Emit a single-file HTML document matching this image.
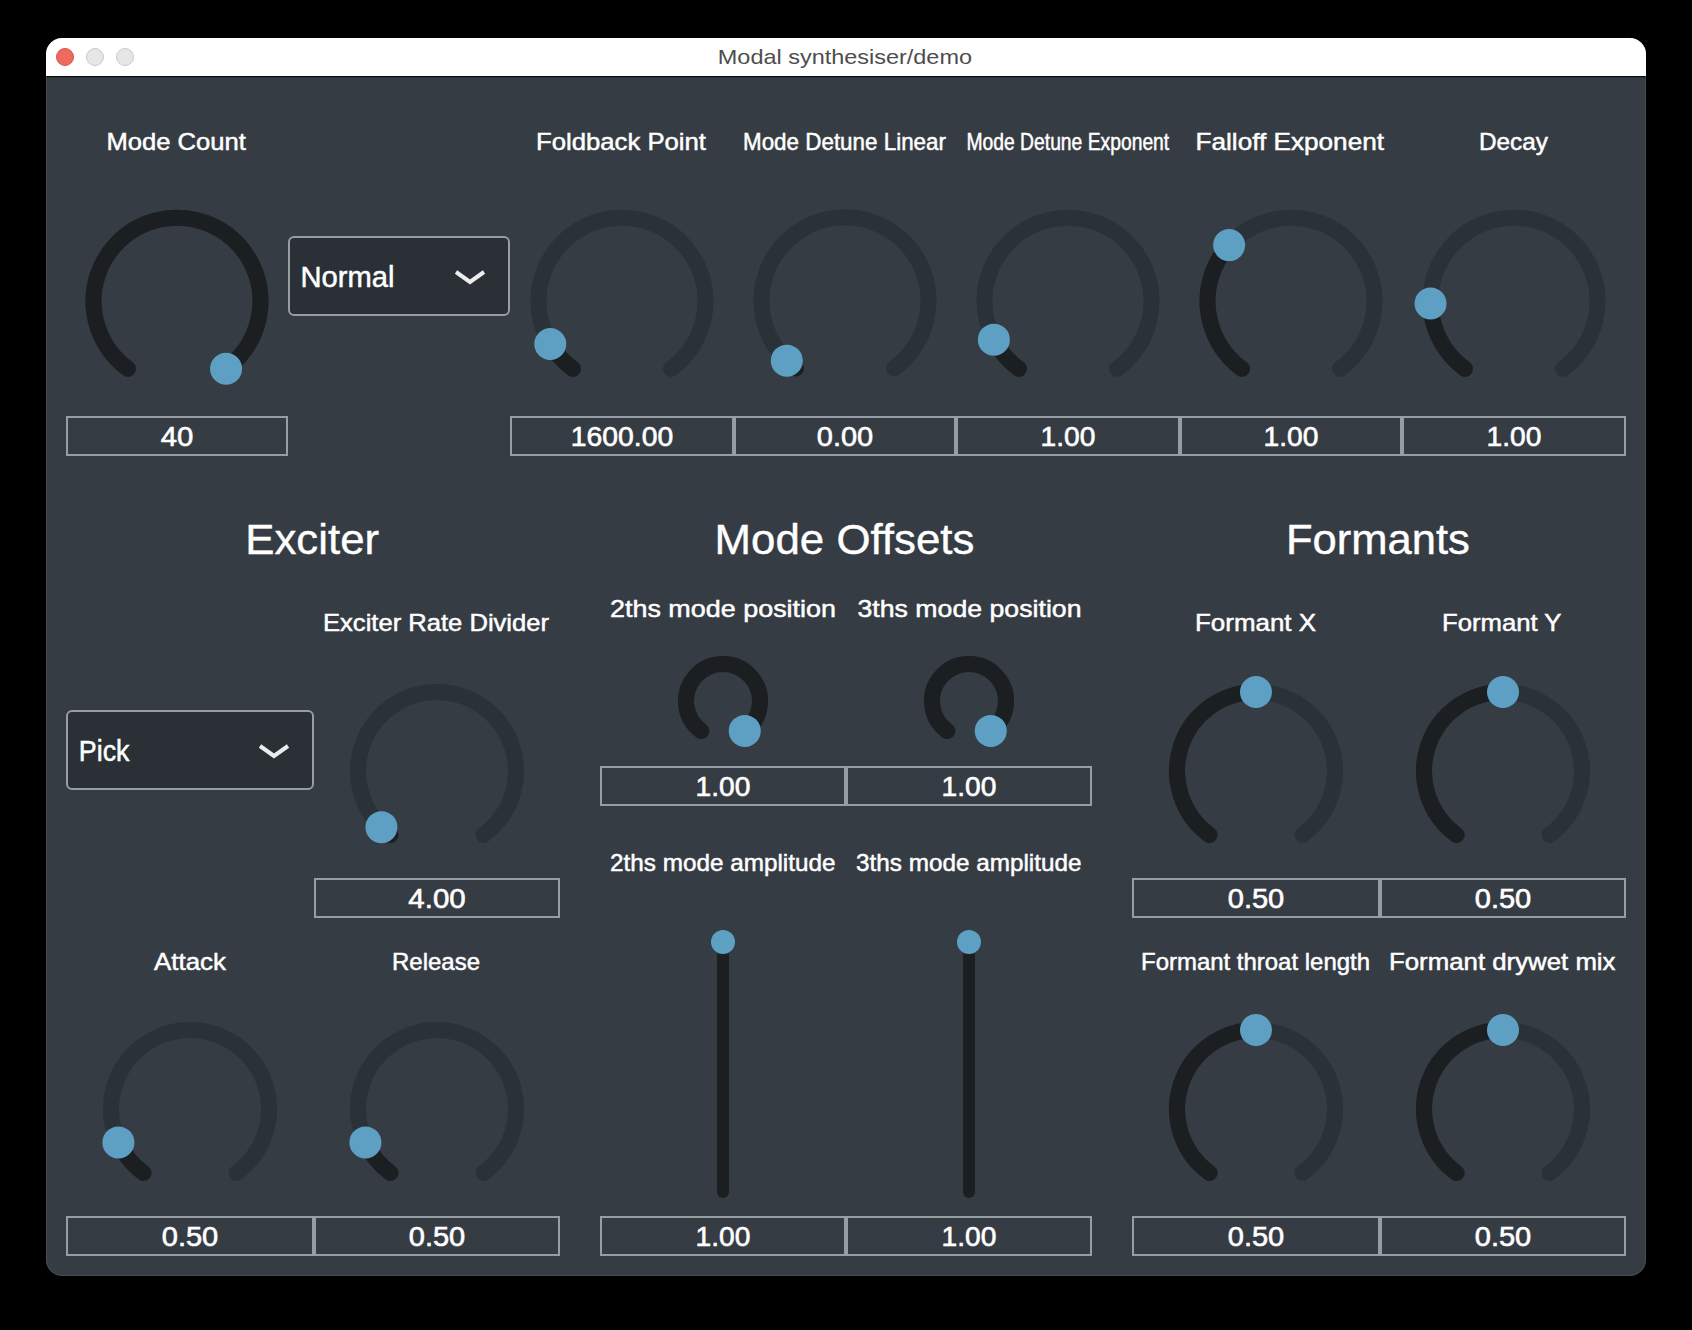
<!DOCTYPE html>
<html><head><meta charset="utf-8"><style>
html,body{margin:0;padding:0;background:#000;width:1692px;height:1330px;overflow:hidden}
#win{position:absolute;left:46px;top:38px;width:1600px;height:1238px;border-radius:16px;overflow:hidden;background:#363c43}
#tb{position:absolute;left:0;top:0;width:1600px;height:38px;background:#fff}
#sep{position:absolute;left:0;top:38px;width:1600px;height:1px;background:#061015}
#sep2{position:absolute;left:0;top:39px;width:1600px;height:1px;background:#282e34}
#edge{position:absolute;left:46px;top:38px;width:1600px;height:1238px;border-radius:16px;box-sizing:border-box;border:1px solid rgba(255,255,255,0.09)}
.dot{position:absolute;top:10px;width:18px;height:18px;border-radius:50%;box-sizing:border-box}
svg{position:absolute;left:0;top:0}
text{font-family:"Liberation Sans",sans-serif;fill:#fff}
.t{font-size:21px;fill:#4d4d4d}
.l{font-size:24.5px;stroke:#fff;stroke-width:0.5px}
.h{font-size:42.8px;stroke:#fff;stroke-width:0.4px}
.c{font-size:29.3px;stroke:#fff;stroke-width:0.5px}
.v{font-size:27px;text-anchor:middle;stroke:#fff;stroke-width:0.6px}
</style></head><body>
<div id="win">
<div id="tb">
<div class="dot" style="left:10px;background:#ed6a5e;border:1px solid #d9534a"></div>
<div class="dot" style="left:40px;background:#e6e6e6;border:1px solid #c9c9c9"></div>
<div class="dot" style="left:70px;background:#e6e6e6;border:1px solid #c9c9c9"></div>
</div>
<div id="sep"></div><div id="sep2"></div>
</div>
<div id="edge"></div>
<svg width="1692" height="1330" viewBox="0 0 1692 1330">
<text x="717.8" y="64.1" class="t" textLength="254.2" lengthAdjust="spacingAndGlyphs">Modal synthesiser/demo</text>
<text x="106.4" y="150.0" class="l" textLength="139.5" lengthAdjust="spacingAndGlyphs">Mode Count</text>
<text x="536.0" y="150.0" class="l" textLength="170.0" lengthAdjust="spacingAndGlyphs">Foldback Point</text>
<text x="743.0" y="150.0" class="l" textLength="203.0" lengthAdjust="spacingAndGlyphs">Mode Detune Linear</text>
<text x="966.5" y="150.0" class="l" textLength="202.7" lengthAdjust="spacingAndGlyphs">Mode Detune Exponent</text>
<text x="1195.5" y="150.0" class="l" textLength="188.5" lengthAdjust="spacingAndGlyphs">Falloff Exponent</text>
<text x="1479.0" y="150.0" class="l" textLength="69.0" lengthAdjust="spacingAndGlyphs">Decay</text>
<path d="M127.92 368.75A83.5 83.5 0 1 1 226.08 368.75" fill="none" stroke="#2a3137" stroke-width="16" stroke-linecap="round"/>
<path d="M127.92 368.75A83.5 83.5 0 1 1 226.08 368.75" fill="none" stroke="#1b1f22" stroke-width="16" stroke-linecap="round"/>
<circle cx="226.08" cy="368.75" r="16" fill="#5da0c4"/>
<path d="M572.92 368.75A83.5 83.5 0 1 1 671.08 368.75" fill="none" stroke="#2a3137" stroke-width="16" stroke-linecap="round"/>
<path d="M572.92 368.75A83.5 83.5 0 0 1 550.28 343.96" fill="none" stroke="#1b1f22" stroke-width="16" stroke-linecap="round"/>
<circle cx="550.28" cy="343.96" r="16" fill="#5da0c4"/>
<path d="M795.92 368.35A83.5 83.5 0 1 1 894.08 368.35" fill="none" stroke="#2a3137" stroke-width="16" stroke-linecap="round"/>
<path d="M795.92 368.35A83.5 83.5 0 0 1 786.79 360.66" fill="none" stroke="#1b1f22" stroke-width="16" stroke-linecap="round"/>
<circle cx="786.79" cy="360.66" r="16" fill="#5da0c4"/>
<path d="M1018.92 368.75A83.5 83.5 0 1 1 1117.08 368.75" fill="none" stroke="#2a3137" stroke-width="16" stroke-linecap="round"/>
<path d="M1018.92 368.75A83.5 83.5 0 0 1 993.87 339.63" fill="none" stroke="#1b1f22" stroke-width="16" stroke-linecap="round"/>
<circle cx="993.87" cy="339.63" r="16" fill="#5da0c4"/>
<path d="M1241.92 368.75A83.5 83.5 0 1 1 1340.08 368.75" fill="none" stroke="#2a3137" stroke-width="16" stroke-linecap="round"/>
<path d="M1241.92 368.75A83.5 83.5 0 0 1 1229.14 245.11" fill="none" stroke="#1b1f22" stroke-width="16" stroke-linecap="round"/>
<circle cx="1229.14" cy="245.11" r="16" fill="#5da0c4"/>
<path d="M1464.92 368.75A83.5 83.5 0 1 1 1563.08 368.75" fill="none" stroke="#2a3137" stroke-width="16" stroke-linecap="round"/>
<path d="M1464.92 368.75A83.5 83.5 0 0 1 1430.53 303.53" fill="none" stroke="#1b1f22" stroke-width="16" stroke-linecap="round"/>
<circle cx="1430.53" cy="303.53" r="16" fill="#5da0c4"/>
<rect x="67" y="417" width="220" height="38" fill="none" stroke="#979ea1" stroke-width="2"/>
<text x="177.0" y="446" class="v" textLength="32.6" lengthAdjust="spacingAndGlyphs">40</text>
<rect x="511" y="417" width="222" height="38" fill="none" stroke="#979ea1" stroke-width="2"/>
<text x="622.0" y="446" class="v" textLength="102.3" lengthAdjust="spacingAndGlyphs">1600.00</text>
<rect x="735" y="417" width="220" height="38" fill="none" stroke="#979ea1" stroke-width="2"/>
<text x="845.0" y="446" class="v" textLength="56.4" lengthAdjust="spacingAndGlyphs">0.00</text>
<rect x="957" y="417" width="222" height="38" fill="none" stroke="#979ea1" stroke-width="2"/>
<text x="1068.0" y="446" class="v" textLength="54.8" lengthAdjust="spacingAndGlyphs">1.00</text>
<rect x="1181" y="417" width="220" height="38" fill="none" stroke="#979ea1" stroke-width="2"/>
<text x="1291.0" y="446" class="v" textLength="54.8" lengthAdjust="spacingAndGlyphs">1.00</text>
<rect x="1403" y="417" width="222" height="38" fill="none" stroke="#979ea1" stroke-width="2"/>
<text x="1514.0" y="446" class="v" textLength="54.8" lengthAdjust="spacingAndGlyphs">1.00</text>
<rect x="289" y="237" width="220" height="78" rx="5" ry="5" fill="#2a3036" stroke="#979ea1" stroke-width="2"/>
<text x="300.5" y="287.2" class="c" textLength="94.0" lengthAdjust="spacingAndGlyphs">Normal</text>
<path d="M456 272.0L470 282.0L484 272.0" fill="none" stroke="#ececec" stroke-width="4"/>
<text x="245.2" y="554.0" class="h" textLength="133.9" lengthAdjust="spacingAndGlyphs">Exciter</text>
<text x="714.6" y="554.0" class="h" textLength="259.8" lengthAdjust="spacingAndGlyphs">Mode Offsets</text>
<text x="1286.0" y="554.0" class="h" textLength="183.9" lengthAdjust="spacingAndGlyphs">Formants</text>
<rect x="67" y="711" width="246" height="78" rx="5" ry="5" fill="#2a3036" stroke="#979ea1" stroke-width="2"/>
<text x="78.8" y="761.4" class="c" textLength="50.7" lengthAdjust="spacingAndGlyphs">Pick</text>
<path d="M260 746.0L274 756.0L288 746.0" fill="none" stroke="#ececec" stroke-width="4"/>
<text x="323.0" y="631.1" class="l" textLength="226.0" lengthAdjust="spacingAndGlyphs">Exciter Rate Divider</text>
<path d="M390.56 834.91A79 79 0 1 1 483.44 834.91" fill="none" stroke="#2a3137" stroke-width="16" stroke-linecap="round"/>
<path d="M390.56 834.91A79 79 0 0 1 381.43 827.15" fill="none" stroke="#1b1f22" stroke-width="16" stroke-linecap="round"/>
<circle cx="381.43" cy="827.15" r="16" fill="#5da0c4"/>
<rect x="315" y="879" width="244" height="38" fill="none" stroke="#979ea1" stroke-width="2"/>
<text x="437.0" y="908" class="v" textLength="57.3" lengthAdjust="spacingAndGlyphs">4.00</text>
<text x="154.0" y="969.5" class="l" textLength="72.0" lengthAdjust="spacingAndGlyphs">Attack</text>
<text x="392.0" y="969.5" class="l" textLength="88.0" lengthAdjust="spacingAndGlyphs">Release</text>
<path d="M143.56 1172.91A79 79 0 1 1 236.44 1172.91" fill="none" stroke="#2a3137" stroke-width="16" stroke-linecap="round"/>
<path d="M143.56 1172.91A79 79 0 0 1 118.40 1142.39" fill="none" stroke="#1b1f22" stroke-width="16" stroke-linecap="round"/>
<circle cx="118.40" cy="1142.39" r="16" fill="#5da0c4"/>
<path d="M390.56 1172.91A79 79 0 1 1 483.44 1172.91" fill="none" stroke="#2a3137" stroke-width="16" stroke-linecap="round"/>
<path d="M390.56 1172.91A79 79 0 0 1 365.40 1142.39" fill="none" stroke="#1b1f22" stroke-width="16" stroke-linecap="round"/>
<circle cx="365.40" cy="1142.39" r="16" fill="#5da0c4"/>
<rect x="67" y="1217" width="246" height="38" fill="none" stroke="#979ea1" stroke-width="2"/>
<text x="190.0" y="1246" class="v" textLength="56.5" lengthAdjust="spacingAndGlyphs">0.50</text>
<rect x="315" y="1217" width="244" height="38" fill="none" stroke="#979ea1" stroke-width="2"/>
<text x="437.0" y="1246" class="v" textLength="56.5" lengthAdjust="spacingAndGlyphs">0.50</text>
<text x="610.0" y="617.0" class="l" textLength="226.0" lengthAdjust="spacingAndGlyphs">2ths mode position</text>
<text x="857.5" y="617.0" class="l" textLength="224.0" lengthAdjust="spacingAndGlyphs">3ths mode position</text>
<path d="M701.25 730.93A37 37 0 1 1 744.75 730.93" fill="none" stroke="#2a3137" stroke-width="16" stroke-linecap="round"/>
<path d="M701.25 730.93A37 37 0 1 1 744.75 730.93" fill="none" stroke="#1b1f22" stroke-width="16" stroke-linecap="round"/>
<circle cx="744.75" cy="730.93" r="16" fill="#5da0c4"/>
<path d="M947.25 730.93A37 37 0 1 1 990.75 730.93" fill="none" stroke="#2a3137" stroke-width="16" stroke-linecap="round"/>
<path d="M947.25 730.93A37 37 0 1 1 990.75 730.93" fill="none" stroke="#1b1f22" stroke-width="16" stroke-linecap="round"/>
<circle cx="990.75" cy="730.93" r="16" fill="#5da0c4"/>
<rect x="601" y="767" width="244" height="38" fill="none" stroke="#979ea1" stroke-width="2"/>
<text x="723.0" y="796" class="v" textLength="54.8" lengthAdjust="spacingAndGlyphs">1.00</text>
<rect x="847" y="767" width="244" height="38" fill="none" stroke="#979ea1" stroke-width="2"/>
<text x="969.0" y="796" class="v" textLength="54.8" lengthAdjust="spacingAndGlyphs">1.00</text>
<text x="610.0" y="871.4" class="l" textLength="225.5" lengthAdjust="spacingAndGlyphs">2ths mode amplitude</text>
<text x="856.0" y="871.4" class="l" textLength="225.5" lengthAdjust="spacingAndGlyphs">3ths mode amplitude</text>
<line x1="723" y1="1192" x2="723" y2="942" stroke="#1b1f22" stroke-width="12" stroke-linecap="round"/>
<circle cx="723" cy="942" r="12" fill="#5da0c4"/>
<line x1="969" y1="1192" x2="969" y2="942" stroke="#1b1f22" stroke-width="12" stroke-linecap="round"/>
<circle cx="969" cy="942" r="12" fill="#5da0c4"/>
<rect x="601" y="1217" width="244" height="38" fill="none" stroke="#979ea1" stroke-width="2"/>
<text x="723.0" y="1246" class="v" textLength="54.8" lengthAdjust="spacingAndGlyphs">1.00</text>
<rect x="847" y="1217" width="244" height="38" fill="none" stroke="#979ea1" stroke-width="2"/>
<text x="969.0" y="1246" class="v" textLength="54.8" lengthAdjust="spacingAndGlyphs">1.00</text>
<text x="1195.0" y="631.3" class="l" textLength="121.0" lengthAdjust="spacingAndGlyphs">Formant X</text>
<text x="1442.0" y="631.3" class="l" textLength="119.5" lengthAdjust="spacingAndGlyphs">Formant Y</text>
<path d="M1209.56 834.91A79 79 0 1 1 1302.44 834.91" fill="none" stroke="#2a3137" stroke-width="16" stroke-linecap="round"/>
<path d="M1209.56 834.91A79 79 0 0 1 1256.00 692.00" fill="none" stroke="#1b1f22" stroke-width="16" stroke-linecap="round"/>
<circle cx="1256.00" cy="692.00" r="16" fill="#5da0c4"/>
<path d="M1456.56 834.91A79 79 0 1 1 1549.44 834.91" fill="none" stroke="#2a3137" stroke-width="16" stroke-linecap="round"/>
<path d="M1456.56 834.91A79 79 0 0 1 1503.00 692.00" fill="none" stroke="#1b1f22" stroke-width="16" stroke-linecap="round"/>
<circle cx="1503.00" cy="692.00" r="16" fill="#5da0c4"/>
<rect x="1133" y="879" width="246" height="38" fill="none" stroke="#979ea1" stroke-width="2"/>
<text x="1256.0" y="908" class="v" textLength="56.5" lengthAdjust="spacingAndGlyphs">0.50</text>
<rect x="1381" y="879" width="244" height="38" fill="none" stroke="#979ea1" stroke-width="2"/>
<text x="1503.0" y="908" class="v" textLength="56.5" lengthAdjust="spacingAndGlyphs">0.50</text>
<text x="1141.0" y="969.5" class="l" textLength="229.0" lengthAdjust="spacingAndGlyphs">Formant throat length</text>
<text x="1389.0" y="969.5" class="l" textLength="226.5" lengthAdjust="spacingAndGlyphs">Formant drywet mix</text>
<path d="M1209.56 1172.91A79 79 0 1 1 1302.44 1172.91" fill="none" stroke="#2a3137" stroke-width="16" stroke-linecap="round"/>
<path d="M1209.56 1172.91A79 79 0 0 1 1256.00 1030.00" fill="none" stroke="#1b1f22" stroke-width="16" stroke-linecap="round"/>
<circle cx="1256.00" cy="1030.00" r="16" fill="#5da0c4"/>
<path d="M1456.56 1172.91A79 79 0 1 1 1549.44 1172.91" fill="none" stroke="#2a3137" stroke-width="16" stroke-linecap="round"/>
<path d="M1456.56 1172.91A79 79 0 0 1 1503.00 1030.00" fill="none" stroke="#1b1f22" stroke-width="16" stroke-linecap="round"/>
<circle cx="1503.00" cy="1030.00" r="16" fill="#5da0c4"/>
<rect x="1133" y="1217" width="246" height="38" fill="none" stroke="#979ea1" stroke-width="2"/>
<text x="1256.0" y="1246" class="v" textLength="56.5" lengthAdjust="spacingAndGlyphs">0.50</text>
<rect x="1381" y="1217" width="244" height="38" fill="none" stroke="#979ea1" stroke-width="2"/>
<text x="1503.0" y="1246" class="v" textLength="56.5" lengthAdjust="spacingAndGlyphs">0.50</text>
</svg>
</body></html>
